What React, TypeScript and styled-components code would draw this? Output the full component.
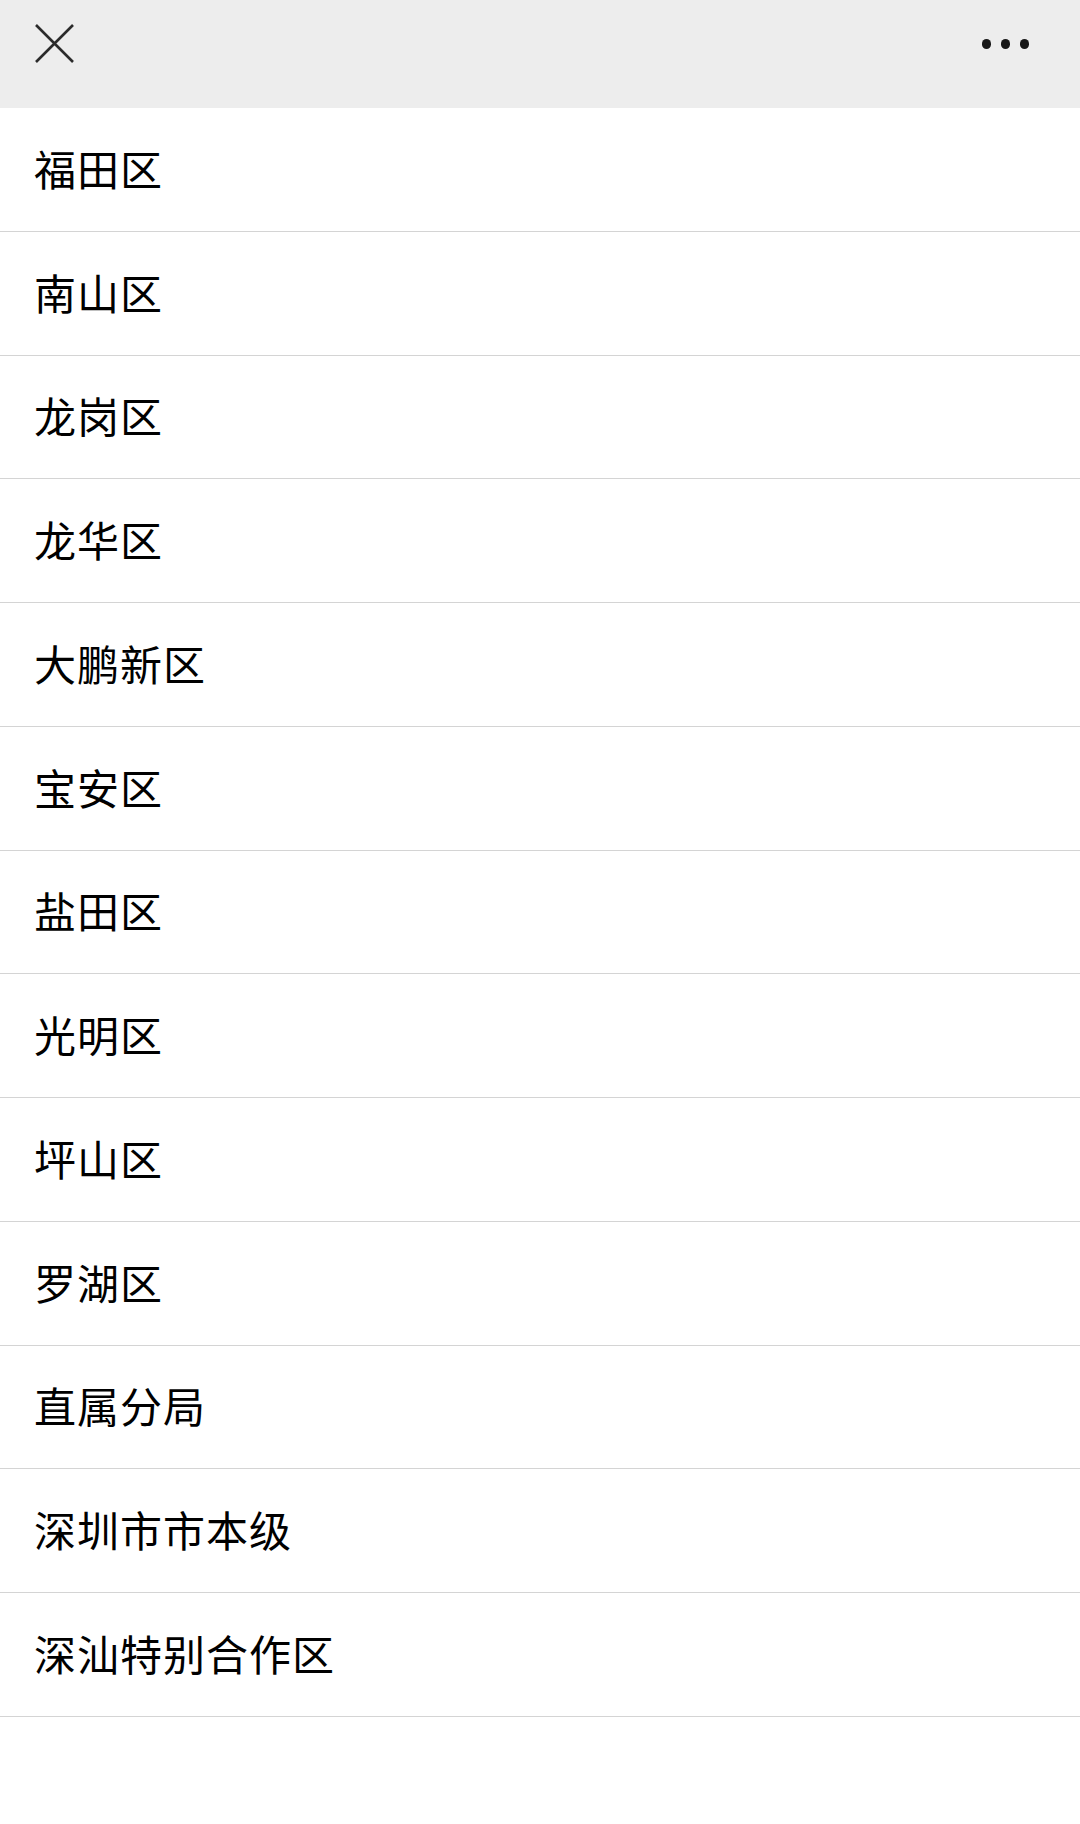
import styled, { createGlobalStyle } from 'styled-components'

const GlobalStyle = createGlobalStyle`
  html, body {
    margin: 0;
    padding: 0;
    background: #fff;
  }
  body {
    font-family: "Noto Sans CJK SC", "Noto Sans", sans-serif;
  }
`

const Page = styled.div`
  width: 1080px;
  min-height: 1824px;
  background: #fff;
`

const TopBar = styled.header`
  height: 108px;
  background: #ededed;
  display: flex;
  align-items: flex-start;
  justify-content: space-between;
  padding: 0 51px 0 34px;
  box-sizing: border-box;
`

const IconButton = styled.button`
  border: 0;
  background: none;
  padding: 0;
  margin-top: 23px;
  width: 41px;
  height: 41px;
  display: flex;
  align-items: center;
  justify-content: center;
  cursor: pointer;
`

const Dots = styled.div`
  display: flex;
  gap: 9.5px;
  margin-top: 39px;
`

const Dot = styled.span`
  width: 9.5px;
  height: 9.5px;
  border-radius: 50%;
  background: #181818;
`

const List = styled.ul`
  list-style: none;
  margin: 0;
  padding: 0;
`

const Row = styled.li`
  height: 123.75px;
  box-sizing: border-box;
  border-bottom: 1.8px solid #d4d4d4;
  display: flex;
  align-items: center;
  padding-left: 34px;
  padding-bottom: 4px;
  font-size: 42px;
  letter-spacing: 1px;
  color: #000;
`

const districts = [
  '福田区',
  '南山区',
  '龙岗区',
  '龙华区',
  '大鹏新区',
  '宝安区',
  '盐田区',
  '光明区',
  '坪山区',
  '罗湖区',
  '直属分局',
  '深圳市市本级',
  '深汕特别合作区',
]

const App = () => {
  return (
    <Page>
      <GlobalStyle />
      <TopBar>
        <IconButton aria-label='close'>
          <svg width='41' height='41' viewBox='0 0 41 41'>
            <path
              d='M2 2 L39 39 M39 2 L2 39'
              stroke='#2b2b2b'
              strokeWidth='2.6'
              fill='none'
            />
          </svg>
        </IconButton>
        <Dots>
          <Dot />
          <Dot />
          <Dot />
        </Dots>
      </TopBar>
      <List>
        {districts.map((name) => (
          <Row key={name}>{name}</Row>
        ))}
      </List>
    </Page>
  )
}

export default App
